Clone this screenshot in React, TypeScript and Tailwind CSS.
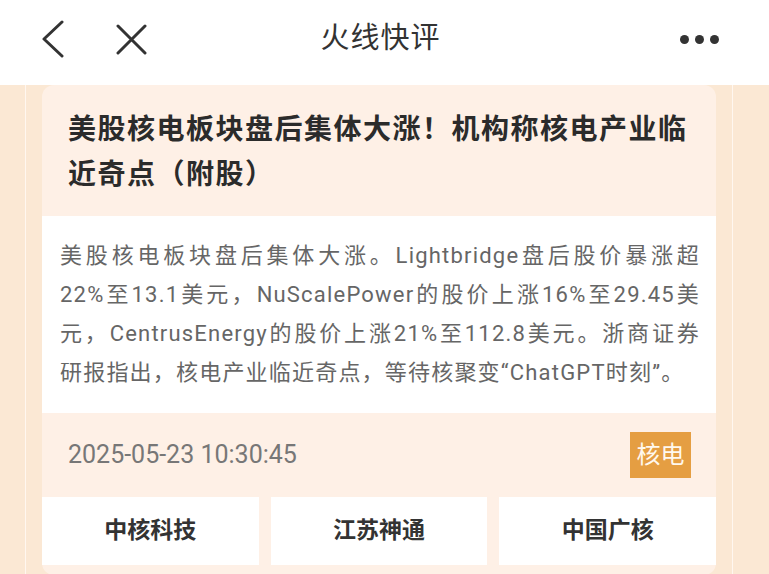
import React from "react";

const FONT = "font-['Roboto','Noto_Sans_CJK_SC',sans-serif]";

export default function App() {
  const bodyLines = [
    "美股核电板块盘后集体大涨。Lightbridge盘后股价暴涨超",
    "22%至13.1美元，NuScalePower的股价上涨16%至29.45美",
    "元，CentrusEnergy的股价上涨21%至112.8美元。浙商证券",
  ];
  return (
    <div className={`w-[769px] min-h-screen bg-[#fbe8d4] ${FONT}`}>
      {/* Header */}
      <div className="flex h-[85px] items-center bg-white pb-[7px]">
        <div className="flex w-[160px] items-center pl-[41px]">
          <svg width="24" height="38" viewBox="0 0 24 38" fill="none">
            <path d="M21 2 L3 19 L21 36" stroke="#333" strokeWidth="3" strokeLinecap="round" strokeLinejoin="round" />
          </svg>
          <svg className="ml-[50px]" width="32" height="32" viewBox="0 0 32 32" fill="none">
            <path d="M3 3 L30 30 M30 3 L3 30" stroke="#333" strokeWidth="3" strokeLinecap="round" />
          </svg>
        </div>
        <div className="flex-1 pr-[8px] text-center text-[29px] font-normal tracking-[1px] text-[#333]">火线快评</div>
        <div className="flex w-[160px] items-center justify-end gap-[6px] pr-[50px]">
          <span className="h-[9px] w-[9px] rounded-full bg-[#333]" />
          <span className="h-[9px] w-[9px] rounded-full bg-[#333]" />
          <span className="h-[9px] w-[9px] rounded-full bg-[#333]" />
        </div>
      </div>

      {/* Content */}
      <div className="pl-[25px] pr-[36px]">
        <div className="border-x border-[#fff7f0] px-[16px]">
          <div className="rounded-[12px] bg-[#fef0e6] pb-[10px]">
            {/* Title */}
            <div className="px-[26px] pt-[22px] pb-[19px] text-[28px] font-bold tracking-[1.5px] text-[#2b2b2b]">
              <div className="h-[45px] whitespace-nowrap leading-[45px]">美股核电板块盘后集体大涨！机构称核电产业临</div>
              <div className="h-[45px] whitespace-nowrap leading-[45px]">近奇点（附股）</div>
            </div>

            {/* Body */}
            <div className="bg-white pl-[18px] pr-[16px] pt-[20px] pb-[21px] text-[22px] tracking-[1.2px] text-[#666]">
              {bodyLines.map((l, i) => (
                <div key={i} className="h-[39px] whitespace-nowrap leading-[39px] text-justify [text-align-last:justify]">
                  {l}
                </div>
              ))}
              <div className="h-[39px] whitespace-nowrap leading-[39px]">
                研报指出，核电产业临近奇点，等待核聚变“ChatGPT时刻”。
              </div>
            </div>

            {/* Footer */}
            <div className="flex h-[84px] items-center justify-between pl-[26px] pr-[25px]">
              <span className="text-[25px] text-[#777]">2025-05-23 10:30:45</span>
              <span className="flex h-[46px] w-[61px] items-center justify-center bg-[#e59e42] text-[24px] text-[#fff8ee]">
                核电
              </span>
            </div>

            {/* Buttons */}
            <div className="grid grid-cols-3 gap-[12px]">
              {["中核科技", "江苏神通", "中国广核"].map((t) => (
                <div key={t} className="flex h-[68px] items-center justify-center bg-white text-[23px] font-bold text-[#333]">
                  {t}
                </div>
              ))}
            </div>
          </div>
        </div>
      </div>
    </div>
  );
}
